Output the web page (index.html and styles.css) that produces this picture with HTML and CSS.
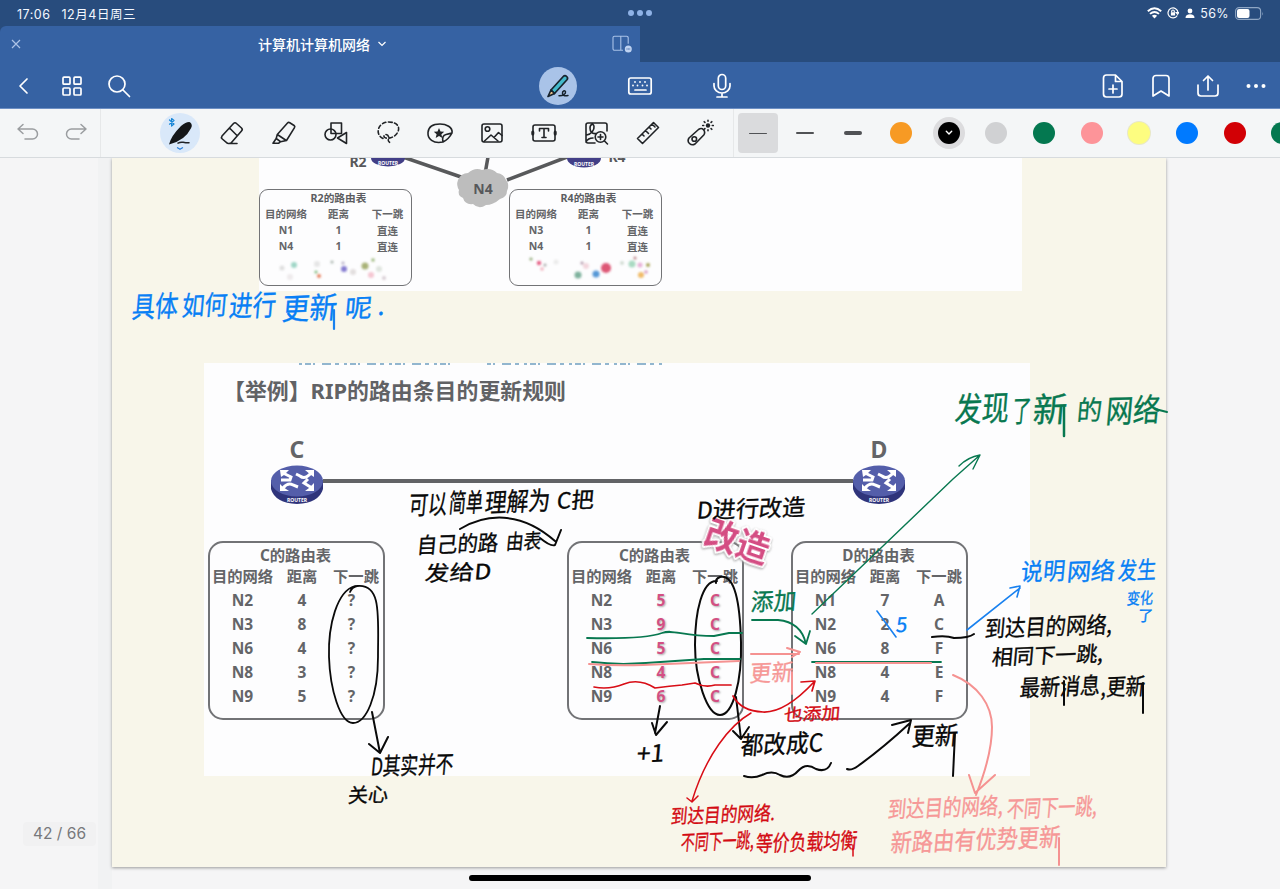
FILE: index.html
```html
<!DOCTYPE html>
<html lang="zh-CN">
<head>
<meta charset="utf-8">
<title>计算机计算机网络</title>
<link rel="stylesheet" href="styles.css">
</head>
<body>
<div class="app">
  <header class="status">
    <div class="status-left"><span>17:06</span><span class="date">12月4日周三</span></div>
    <div class="dots"><i></i><i></i><i></i></div>
    <div class="status-right">
      <svg width="15" height="12" viewBox="0 0 15 12" fill="none" stroke="#fff" stroke-width="1.9"><path d="M.8 4.2Q7.5-1.8 14.200 4.200M3 6.900Q7.500 3 12 6.900"/><path d="M7.500 11.500 4.900 8.700Q7.500 6.700 10.100 8.700Z" fill="#fff" stroke="none"/></svg>
      <svg class="lock" width="12" height="12" viewBox="0 0 12 12" fill="none" stroke="#fff" stroke-width="1.200"><path d="M10.300 8.500A5 5 0 1 1 11 5.500M9.200 5.500h2.600l-1.200 1.800z"/><rect x="3.900" y="5.300" width="4.200" height="3.200" fill="#fff" stroke="none"/><path d="M4.700 5.500V4.300a1.300 1.300 0 0 1 2.600 0v1.200"/></svg>
      <svg class="person" width="10" height="11" viewBox="0 0 10 11" fill="#fff"><circle cx="5" cy="3" r="2.400"/><path d="M.5 10Q.5 6.300 5 6.300T9.500 10Z"/></svg>
      <span class="pct">56%</span>
      <svg width="29" height="13" viewBox="0 0 29 13"><rect x=".6" y=".6" width="25" height="11.800" rx="3.500" fill="none" stroke="#8fa6c4" stroke-width="1.100"/><rect x="2" y="2" width="12.500" height="9" rx="2" fill="#fff"/><path d="M27.300 4.500q1.300 2 0 4z" fill="#8fa6c4"/></svg>
    </div>
  </header>

  <div class="tabs">
    <div class="tab">
      <svg class="tab-x" width="10" height="10" viewBox="0 0 10 10" stroke="#adc3e6" stroke-width="1.200"><path d="M1 1 9 9M9 1 1 9"/></svg>
      <div class="tab-title">计算机计算机网络<svg width="8" height="6" viewBox="0 0 8 6" fill="none" stroke="#fff" stroke-width="1.200"><path d="M.5 1 4 4.500 7.500 1"/></svg></div>
      <svg class="tab-split" width="21" height="18" viewBox="0 0 21 18" fill="none" stroke="#a9c2e8" stroke-width="1.100"><path d="M11 15.300H2.500a1.500 1.500 0 0 1-1.500-1.500v-11A1.500 1.500 0 0 1 2.500 1.300h12.200a1.500 1.500 0 0 1 1.500 1.500v6M8.800 1.300v14"/><circle cx="16.300" cy="14" r="3.500" fill="#bfd3f2" stroke="none"/><path d="M14.500 14h3.700" stroke="#4569a2" stroke-dasharray="1 .4"/></svg>
    </div>
  </div>

  <nav class="nav">
    <div class="cell"><svg width="26" height="26" viewBox="0 0 26 26"><path d="m16 6-7 7 7 7"/></svg></div>
    <div class="cell"><svg width="26" height="26" viewBox="0 0 26 26"><rect x="4" y="4.200" width="7" height="7" rx="1"/><rect x="15" y="4.200" width="7" height="7" rx="1"/><rect x="4" y="15" width="7" height="7" rx="1"/><rect x="15" y="15" width="7" height="7" rx="1"/></svg></div>
    <div class="cell"><svg width="26" height="26" viewBox="0 0 26 26"><circle cx="11" cy="11" r="8"/><path d="m17 17 6.500 6.500"/></svg></div>
    <div class="modes">
      <div class="mode on"><svg width="26" height="26" viewBox="0 0 26 26" stroke-linejoin="round"><path d="M6 17 18.500 3.200q1.600-1.200 3.200.3t.3 3.200L9.500 20.500Z" fill="#43b9cb" stroke="#17232d"/><path d="M6 17 3 23.500 9.500 20.500Z" fill="#f2c58c" stroke="#17232d"/><path d="M14 22.800c4 .2 7-2 6.500-4s-3.300-.7-3 1.500 2 3 5.500 2.200" stroke="#17232d" stroke-width="1.500"/></svg></div>
      <div class="mode"><svg width="26" height="26" viewBox="0 0 26 26"><rect x="1.800" y="5" width="22.400" height="16" rx="2"/><path d="M8 17h11"/><g fill="#fff" stroke="none"><circle cx="8" cy="9" r=".9"/><circle cx="13" cy="9" r=".9"/><circle cx="18" cy="9" r=".9"/><circle cx="6" cy="12.500" r=".9"/><circle cx="10.500" cy="12.500" r=".9"/><circle cx="15.500" cy="12.500" r=".9"/><circle cx="20" cy="12.500" r=".9"/></g></svg></div>
      <div class="mode"><svg width="26" height="26" viewBox="0 0 26 26"><rect x="9.300" y="1.500" width="7.400" height="15" rx="3.700"/><path d="M5 10.500v2.500a8 7 0 0 0 16 0v-2.500M13 20v4M8 24h10"/></svg></div>
    </div>
    <div class="cell"><svg width="26" height="26" viewBox="0 0 26 26"><path d="M15.500 2H6.500a3 3 0 0 0-3 3v16a3 3 0 0 0 3 3h12.500a3 3 0 0 0 3-3V8.500ZM15.500 2v6.500H22M13 12v8M9 16h8"/></svg></div>
    <div class="cell"><svg width="26" height="26" viewBox="0 0 26 26"><path d="M5 5.500a3 3 0 0 1 3-3h10a3 3 0 0 1 3 3V23l-8-5-8 5Z"/></svg></div>
    <div class="cell"><svg width="26" height="26" viewBox="0 0 26 26"><path d="M3 12v8a3 3 0 0 0 3 3h14a3 3 0 0 0 3-3v-8M13 17V3M8.500 7.500 13 3l4.500 4.500"/></svg></div>
    <div class="cell"><svg width="26" height="26" viewBox="0 0 26 26"><g fill="#fff" stroke="none"><circle cx="5.500" cy="13" r="2"/><circle cx="13" cy="13" r="2"/><circle cx="20.500" cy="13" r="2"/></g></svg></div>
  </nav>

  <div class="tools">
    <div class="undo"><svg width="26" height="26" viewBox="0 0 26 26"><path d="M8 4.500 3 9l5 4.500M3 9h14.500a5 5 0 0 1 0 10H10"/></svg></div>
    <div class="undo"><svg width="26" height="26" viewBox="0 0 26 26"><path d="m18 4.500 5 4.500-5 4.500M23 9H8.500a5 5 0 0 0 0 10H16"/></svg></div>
    <div class="rule"></div>
    <div class="toolset">
      <div class="tool pen"><svg width="40" height="40" viewBox="0 0 40 40"><path d="M9 31.500Q11 23 21 13q5.500-4.500 9-3.800 3 2.300 1 6Q25 27.500 9 31.500Z" fill="#151719" stroke="none"/><path d="M18 30.200c4-2.500 4-.2 11-.4" stroke-width="1.500"/><path d="M9.500 7 14 11l-2.400 2V5.500L14 7.500 9.500 11.200" stroke="#1685d6" stroke-width="1.200"/><path d="m17.500 34.800 2.500 1.500 2.500-1.500" stroke="#277edb" stroke-width="1.300"/></svg></div>
      <div class="tool"><svg width="26" height="26" viewBox="0 0 26 26"><path d="M3 16 14.500 3.500q1.500-1.500 3 0l5 4.500q1.500 1.500 0 3L12.500 22.500q-1.500 1.500-4 .8L3.300 19Q1.800 17.500 3 16ZM10.500 8l7.500 7.500M10 23.500h8"/></svg></div>
      <div class="tool"><svg width="26" height="26" viewBox="0 0 26 26"><path d="M6.300 14.500 16.500 3q1-1 2.300-.2l4.300 2.700q1.200.9.400 2.200L15.500 20.500l-6 1.200-4.300-3.200ZM6.300 14.500l9 6M5.200 18.500 2 23.300h5.500l2-1.600"/></svg></div>
      <div class="tool"><svg width="26" height="26" viewBox="0 0 26 26"><rect x="8" y="3" width="10.500" height="10.500"/><circle cx="7.500" cy="14.500" r="5.500"/><path d="M23.500 12.500v11L14.500 18Z"/></svg></div>
      <div class="tool"><svg width="26" height="26" viewBox="0 0 26 26"><path d="M8 18.500C-1 14 3.500 2 13.500 2S26 8.500 21.500 14 8.500 19 9 16s6-1 4.500 3 2.500 2.500 2 5" stroke-dasharray="3.500 2.600"/></svg></div>
      <div class="tool"><svg width="28" height="26" viewBox="0 0 28 26"><path d="M17 22C7 24 1.500 19 2 12.500S8 4 14 4s13 3 12 9Q23 19 17 22Q15.500 15.500 20 14.500T26 13"/><path d="m13 8 1.500 3.400 3.700.3-2.800 2.500.9 3.700-3.300-2-3.300 2 .9-3.700-2.800-2.500 3.700-.3Z" fill="#202326" stroke="none"/></svg></div>
      <div class="tool"><svg width="26" height="26" viewBox="0 0 26 26"><rect x="3" y="4" width="20" height="18" rx="2"/><circle cx="8.500" cy="9" r="2.300"/><path d="M5 21.500 12 15l7 6M15 17.500l4.500-5 3.500 3"/></svg></div>
      <div class="tool"><svg width="28" height="26" viewBox="0 0 28 26"><rect x="3" y="5" width="22" height="16" rx="2"/><path d="M9.500 11V8.500h9V11M14 8.500v9M12 17.500h4"/><path d="M2.800 12v2M25.200 12v2" stroke-width="3"/></svg></div>
      <div class="tool"><svg width="26" height="26" viewBox="0 0 26 26"><path d="M12 23H5a2 2 0 0 1-2-2V5a2 2 0 0 1 2-2h17a2 2 0 0 1 2 2v6M3.500 15c5-1 8-5 7.500-8.500S7 4 7 8s2 6 6 5.500M3 22q2-4 7-4"/><circle cx="17.500" cy="17" r="5.300"/><path d="m21.500 21 3 3M17.500 14.500v5M15 17h5"/></svg></div>
      <div class="tool"><svg width="26" height="26" viewBox="0 0 26 26"><path d="m2.500 18.500 16-16 5 5-16 16ZM7 14l2 2M10.500 10.500l3 3M14 7l2 2M17 4l3 3"/></svg></div>
      <div class="tool"><svg width="28" height="28" viewBox="0 0 28 28"><path d="m3 19 9.500-8.500q3-2 5 .2t.5 5L9 25q-3 1.800-5.500-.5T3 19Z"/><circle cx="8.300" cy="20" r="2.300"/><circle cx="22" cy="6.500" r="2.200" fill="#202326" stroke="none"/><path d="M22 1.200v1M22 10.800v1M16.700 6.500h1M26.300 6.500h1M18.200 2.700l.7.700M25.100 9.600l.7.700M25.800 2.700l-.7.700M18.900 9.600l-.7.700"/></svg></div>
    </div>
    <div class="rule"></div>
    <div class="strokes">
      <div class="stroke chosen"><i class="thin"></i></div>
      <div class="stroke"><i class="mid"></i></div>
      <div class="stroke"><i class="thick"></i></div>
    </div>
    <div class="colours">
      <div><i class="c-orange"></i></div>
      <div><i class="c-black"><svg class="pick" width="8" height="6" viewBox="0 0 8 6"><path d="m1.300 1.300 2.700 2.700 2.700-2.700"/></svg></i></div>
      <div><i class="c-grey"></i></div>
      <div><i class="c-green"></i></div>
      <div><i class="c-pink"></i></div>
      <div><i class="c-yellow"></i></div>
      <div><i class="c-blue"></i></div>
      <div><i class="c-red"></i></div>
      <div><i class="c-green"></i></div>
    </div>
  </div>

  <main class="canvas">
    <div class="gutter"></div>
    <article class="page"></article>

    <section class="slide slide-a">
      <svg class="topology" width="763" height="133" viewBox="259 158 763 133">
        <g stroke="#58595b" stroke-width="3.500"><path d="M403 157 464 178M488 157l-3 17M567 157 507 180"/></g>
        <path d="M458 180q3-7 10-7 7-6 14-3 9-3 15 3 7 1 9 7 4 5 1 11 0 6-7 8-7 6-14 6-7 5-13-1-8 1-10-6-6-3-4-8-3-5-1-10Z" fill="#bdbdbd"/>
        <text x="483" y="194" text-anchor="middle" class="node" font-size="14">N4</text>
        <text x="358" y="167" text-anchor="middle" class="node" font-size="14">R2</text>
        <text x="617" y="162" text-anchor="middle" class="node" font-size="14">R4</text>
        <g fill="#423f87"><ellipse cx="388" cy="158" rx="17" ry="8.500"/><ellipse cx="584" cy="158" rx="17" ry="9.500"/></g>
        <g class="router-label"><text x="388" y="164.500">ROUTER</text><text x="584" y="166">ROUTER</text></g>
      </svg>
      <div class="mini-row">
        <div class="table mini">
          <h3>R2的路由表</h3>
          <div class="head"><b>目的网络</b><b>距离</b><b>下一跳</b></div>
          <div class="row"><b>N1</b><b>1</b><b>直连</b></div>
          <div class="row"><b>N4</b><b>1</b><b>直连</b></div>
        </div>
        <div class="table mini">
          <h3>R4的路由表</h3>
          <div class="head"><b>目的网络</b><b>距离</b><b>下一跳</b></div>
          <div class="row"><b>N3</b><b>1</b><b>直连</b></div>
          <div class="row"><b>N4</b><b>1</b><b>直连</b></div>
        </div>
      </div>
    </section>

    <section class="slide slide-b">
      <svg class="cut" width="380" height="4" viewBox="0 0 380 4"><path d="M4 1H370" stroke="#6f9fc0" stroke-width="1.500" stroke-dasharray="3 3 6 2 2 7 9 4 4 5"/><path d="M155 0h37v4h-37z" fill="#fdfdfe"/></svg>
      <h2>【举例】RIP的路由条目的更新规则</h2>
      <div class="link">
        <div class="host"><span>C</span>
          <svg width="52" height="40" viewBox="0 0 52 40"><path d="M0 15v9q4 14 26 15 22-1 26-15v-9Z" fill="#2f347b"/><ellipse cx="26" cy="16" rx="26" ry="15.500" fill="#545eaa"/><g fill="none" stroke="#fff" stroke-width="3"><path d="m12 8 8 4-1 3h-9M40 8q-6 7-11 3l-4-2M12 23q5-6 10-3l5 2M41 23l-8-5 4-4"/></g><path d="M9 5h9l-2 2-3 3-3 2ZM34 5h9v7l-3-2ZM9 26v-7l3 3 6 4ZM43 18v8h-9l4-3Z" fill="#fff"/><text x="26" y="36.500" class="router-label">ROUTER</text></svg>
        </div>
        <div class="wire"></div>
        <div class="host"><span>D</span>
          <svg width="52" height="40" viewBox="0 0 52 40"><path d="M0 15v9q4 14 26 15 22-1 26-15v-9Z" fill="#2f347b"/><ellipse cx="26" cy="16" rx="26" ry="15.500" fill="#545eaa"/><g fill="none" stroke="#fff" stroke-width="3"><path d="m12 8 8 4-1 3h-9M40 8q-6 7-11 3l-4-2M12 23q5-6 10-3l5 2M41 23l-8-5 4-4"/></g><path d="M9 5h9l-2 2-3 3-3 2ZM34 5h9v7l-3-2ZM9 26v-7l3 3 6 4ZM43 18v8h-9l4-3Z" fill="#fff"/><text x="26" y="36.500" class="router-label">ROUTER</text></svg>
        </div>
      </div>
      <div class="table-row">
        <div class="table big">
          <h3>C的路由表</h3>
          <div class="head"><b>目的网络</b><b>距离</b><b>下一跳</b></div>
          <div class="row q"><b>N2</b><b>4</b><b>?</b></div>
          <div class="row q"><b>N3</b><b>8</b><b>?</b></div>
          <div class="row q"><b>N6</b><b>4</b><b>?</b></div>
          <div class="row q"><b>N8</b><b>3</b><b>?</b></div>
          <div class="row q"><b>N9</b><b>5</b><b>?</b></div>
        </div>
        <div class="table big changed">
          <h3>C的路由表</h3>
          <div class="head"><b>目的网络</b><b>距离</b><b>下一跳</b></div>
          <div class="row"><b>N2</b><b>5</b><b>C</b></div>
          <div class="row"><b>N3</b><b>9</b><b>C</b></div>
          <div class="row"><b>N6</b><b>5</b><b>C</b></div>
          <div class="row"><b>N8</b><b>4</b><b>C</b></div>
          <div class="row"><b>N9</b><b>6</b><b>C</b></div>
        </div>
        <div class="table big last">
          <h3>D的路由表</h3>
          <div class="head"><b>目的网络</b><b>距离</b><b>下一跳</b></div>
          <div class="row"><b>N1</b><b>7</b><b>A</b></div>
          <div class="row"><b>N2</b><b>2</b><b>C</b></div>
          <div class="row"><b>N6</b><b>8</b><b>F</b></div>
          <div class="row"><b>N8</b><b>4</b><b>E</b></div>
          <div class="row"><b>N9</b><b>4</b><b>F</b></div>
        </div>
      </div>
    </section>

    <svg class="inklayer" width="1280" height="731" viewBox="0 158 1280 731">
      <defs><filter id="soft" x="-50%" y="-50%" width="200%" height="200%"><feGaussianBlur stdDeviation=".8"/></filter></defs>
      <g filter="url(#soft)">
        <g opacity=".75"><circle cx="294" cy="265" r="3" fill="#7ec9b5"/><circle cx="344" cy="269" r="3" fill="#5b4fc0"/><circle cx="365" cy="266" r="3.500" fill="#8c9a4a"/><circle cx="319" cy="276" r="2" fill="#e05a2a"/><circle cx="316" cy="272" r="1.500" fill="#4ea04e"/><circle cx="371" cy="275" r="3" fill="#f2b3c2"/><circle cx="373" cy="260" r="1.700" fill="#7aa050"/><circle cx="282" cy="268" r="2.500" fill="#d5d5d5"/><circle cx="317" cy="264" r="3" fill="#dedede"/><circle cx="353" cy="272" r="3" fill="#d9d4d4"/><circle cx="379" cy="269" r="3" fill="#d6ddd4"/><circle cx="332" cy="262" r="1.500" fill="#8a9a90"/><circle cx="343" cy="263" r="1.500" fill="#9a8fb0"/><circle cx="384" cy="278" r="2" fill="#cdbcc6"/><circle cx="290" cy="277" r="3" fill="#e9e4e6"/></g>
        <g opacity=".85"><circle cx="606" cy="268" r="5" fill="#d8395e"/><circle cx="596" cy="274" r="3.500" fill="#3a86d0"/><circle cx="578" cy="275" r="3.500" fill="#69a58c"/><circle cx="539" cy="263" r="2.200" fill="#e2406e"/><circle cx="531" cy="259" r="1.600" fill="#7d9a60"/><circle cx="542" cy="269" r="1.800" fill="#f0a6b4"/><circle cx="545" cy="265" r="1.500" fill="#9a9a9a"/><circle cx="632" cy="264" r="3.500" fill="#9bd4b8"/><circle cx="641" cy="275" r="3" fill="#eeb04e"/><circle cx="640" cy="265" r="2.500" fill="#e4a4d0"/><circle cx="648" cy="265" r="2" fill="#9a9440"/><circle cx="586" cy="266" r="3" fill="#f1cfd8"/><circle cx="582" cy="263" r="1.500" fill="#a08098"/><circle cx="635" cy="258" r="1.500" fill="#b06a70"/><circle cx="646" cy="272" r="1.800" fill="#d38eb8"/><circle cx="556" cy="262" r="2.500" fill="#e8e8e8"/><circle cx="622" cy="263" r="2" fill="#c9d5cc"/></g>
      </g>

      <text class="stamp" transform="translate(702 543) rotate(19)" textLength="66" lengthAdjust="spacingAndGlyphs">改造</text>

      <g class="ink blue">
        <text x="132" y="317" font-size="29" textLength="46" lengthAdjust="spacingAndGlyphs">具体</text>
        <text x="182" y="315" font-size="27" textLength="45" lengthAdjust="spacingAndGlyphs">如何</text>
        <text x="229" y="316" font-size="29" textLength="47" lengthAdjust="spacingAndGlyphs">进行</text>
        <text x="282" y="319" font-size="30" textLength="55" lengthAdjust="spacingAndGlyphs">更新</text>
        <text x="345" y="317" font-size="25" textLength="27" lengthAdjust="spacingAndGlyphs">呢</text>
        <text x="378" y="315" font-size="25">.</text>
        <text x="1021" y="580" font-size="24" textLength="44" lengthAdjust="spacingAndGlyphs">说明</text>
        <text x="1067" y="580" font-size="24" textLength="48" lengthAdjust="spacingAndGlyphs">网络</text>
        <text x="1118" y="579" font-size="24" textLength="38" lengthAdjust="spacingAndGlyphs">发生</text>
        <text x="1127" y="604" font-size="16" textLength="26" lengthAdjust="spacingAndGlyphs">变化</text>
        <text x="1138" y="621" font-size="15">了</text>
        <text x="896" y="632" font-size="20">5</text>
      </g>
      <g class="ink green">
        <text x="955" y="421" font-size="34" textLength="54" lengthAdjust="spacingAndGlyphs">发现</text>
        <text x="1012" y="422" font-size="30" textLength="19" lengthAdjust="spacingAndGlyphs">了</text>
        <text x="1033" y="422" font-size="34" textLength="34" lengthAdjust="spacingAndGlyphs">新</text>
        <text x="1077" y="420" font-size="27" textLength="25" lengthAdjust="spacingAndGlyphs">的</text>
        <text x="1106" y="422" font-size="32" textLength="54" lengthAdjust="spacingAndGlyphs">网络</text>
        <text x="751" y="610" font-size="24" textLength="45" lengthAdjust="spacingAndGlyphs">添加</text>
      </g>
      <g class="ink black">
        <text x="409" y="514" font-size="26" textLength="38" lengthAdjust="spacingAndGlyphs">可以</text>
        <text x="449" y="512" font-size="26" textLength="34" lengthAdjust="spacingAndGlyphs">简单</text>
        <text x="485" y="511" font-size="26" textLength="65" lengthAdjust="spacingAndGlyphs">理解为</text>
        <text x="557" y="508" font-size="22" textLength="37" lengthAdjust="spacingAndGlyphs">C把</text>
        <text x="417" y="552" font-size="22" textLength="81" lengthAdjust="spacingAndGlyphs">自己的路</text>
        <text x="506" y="549" font-size="21" textLength="35" lengthAdjust="spacingAndGlyphs">由表</text>
        <text x="425" y="580" font-size="21" textLength="66" lengthAdjust="spacingAndGlyphs">发给D</text>
        <text x="697" y="517" font-size="23" textLength="108" lengthAdjust="spacingAndGlyphs">D进行改造</text>
        <text x="371" y="774" font-size="24" textLength="82" lengthAdjust="spacingAndGlyphs">D其实并不</text>
        <text x="348" y="802" font-size="20" textLength="40" lengthAdjust="spacingAndGlyphs">关心</text>
        <text x="637" y="762" font-size="24" textLength="27" lengthAdjust="spacingAndGlyphs">+1</text>
        <text x="741" y="753" font-size="25" textLength="82" lengthAdjust="spacingAndGlyphs">都改成C</text>
        <text x="912" y="745" font-size="25" textLength="46" lengthAdjust="spacingAndGlyphs">更新</text>
        <text x="985" y="635" font-size="23" textLength="127" lengthAdjust="spacingAndGlyphs">到达目的网络,</text>
        <text x="992" y="663" font-size="21" textLength="111" lengthAdjust="spacingAndGlyphs">相同下一跳,</text>
        <text x="1020" y="695" font-size="23" textLength="80" lengthAdjust="spacingAndGlyphs">最新消息</text>
        <text x="1101" y="695" font-size="23" textLength="44" lengthAdjust="spacingAndGlyphs">,更新</text>
      </g>
      <g class="ink red">
        <text x="784" y="720" font-size="17" textLength="56" lengthAdjust="spacingAndGlyphs">也添加</text>
        <text x="671" y="822" font-size="20" textLength="104" lengthAdjust="spacingAndGlyphs">到达目的网络.</text>
        <text x="681" y="849" font-size="21" textLength="73" lengthAdjust="spacingAndGlyphs">不同下一跳,</text>
        <text x="756" y="850" font-size="22" textLength="101" lengthAdjust="spacingAndGlyphs">等价负载均衡</text>
      </g>
      <g class="ink pink">
        <text x="750" y="681" font-size="23" textLength="43" lengthAdjust="spacingAndGlyphs">更新</text>
        <text x="888" y="816" font-size="23" textLength="115" lengthAdjust="spacingAndGlyphs">到达目的网络,</text>
        <text x="1007" y="816" font-size="23" textLength="90" lengthAdjust="spacingAndGlyphs">不同下一跳,</text>
        <text x="891" y="849" font-size="25" textLength="169" lengthAdjust="spacingAndGlyphs">新路由有优势更新</text>
      </g>

      <g class="line" stroke="#0a0a0a">
        <path d="M355 586C337 591 328 625 329 657s11 66 24 66 25-26 25-66 4-74-21-71q-5 1-7 6" stroke-width="1.800"/>
        <path d="m372 712 8 41M369 744l11 9 8-16M460 529c25-15 60-19 95 12M540 538q11 9 15 7l6-15"/>
        <path d="M717 581c-15-1-22 31-22 64s12 70 25 70 22-34 21-73-6-68-21-65q-5 2-4 6M660 706l-5 27M652 723l4 12 11-13M736 697l5 42M733 731l8 8 8-12"/>
        <path d="M744 776q9 3 18-1 10-5 18 0 10 5 18-4t18-2q11 4 15-6M847 769q4 2 11-3 25-18 52-43M892 725l19-5-3 13M955 733l-2 43M932 637q14-2 22 1 15 0 20-4"/>
        <path d="M1143 683v30M1064 681v24"/>
      </g>
      <g class="line" stroke="#087850">
        <path d="M587 638c42 1 64-1 75-5s20 3 52 3l15-3h13M592 662q25 3 54 1t58-4h36M812 662h129" stroke-width="1.800"/>
        <path d="M752 620h26q23 2 28 24M795 636l11 8 4-13" stroke-width="1.800"/>
        <path d="M812 614 953 479 980 455M959 466q9-9 21-11l-7 14" stroke-width="1.400"/>
        <path d="M1064 406v30" stroke-width="2.500"/><path d="M1155 409l12 3"/>
      </g>
      <g class="line" stroke="#d80d16">
        <path d="M594 687q15 3 30-3t31 4q15-2 27-3l13-2q10 5 20 2l16 0M733 696q8 15 30 16t51-30M801 682l14-1-3 10" stroke-width="1.700"/>
        <path d="M751 713c-21 12-45 42-59 88M687 798l5 4 6-6M853 845v11" stroke-width="1.500"/>
      </g>
      <g class="line" stroke="#f59291">
        <path d="M589 664q25 2 54 1t96-4M816 663h115M751 654h48M787 648l13 4-8 5M953 675c25 10 39 30 39 52q0 28-16 68M969 775l6 18 20-18M792 672v22M1059 838v27" stroke-width="2"/>
      </g>
      <g class="line" stroke="#1981ef"><path d="m877 611 19 26M967 630l53-42M1010 588l10-2-3 11" stroke-width="1.600"/><path d="M334 310v19" stroke-width="2.200"/></g>
    </svg>
    <div class="counter">42 / 66</div>
    <div class="home"></div>
  </main>
</div>
</body>
</html>
```
FILE: styles.css
```css
* { box-sizing: border-box; }
body { margin: 0; font-family: Inter, "Noto Sans CJK SC", sans-serif; }
.app { width: 1280px; height: 889px; display: flex; flex-direction: column; overflow: hidden; }
.app svg { display: block; flex: none; }

.status { height: 26px; background: #284c7d; color: #f4f8ff; display: grid; grid-template-columns: 1fr 24px 1fr; align-items: center; font-size: 12.5px; }
.status-left { display: flex; align-items: baseline; gap: 11px; padding-left: 17px; letter-spacing: .5px; }
.date { letter-spacing: .55px; }
.dots { display: flex; justify-content: space-between; }
.dots i { width: 6px; height: 6px; border-radius: 50%; background: #8fb2e6; }
.status-right { display: flex; justify-content: flex-end; align-items: center; padding-right: 16px; }
.lock { margin-left: 5px; }
.person { margin-left: 6px; }
.pct { margin: 0 6px 0 5px; letter-spacing: .4px; }

.tabs { height: 36px; background: #284c7d; }
.tab { width: 640px; height: 36px; background: #3662a3; border-top-left-radius: 6px; display: flex; align-items: center; justify-content: space-between; padding: 0 7px 0 11px; }
.tab-title { color: #fff; font-size: 14px; font-weight: 500; display: flex; align-items: center; gap: 8px; margin-left: 11px; }

.nav { height: 47px; background: #3662a3; border-bottom: 1px solid #6d8fc4; display: flex; align-items: center; padding-top: 1px; }
.nav svg { fill: none; stroke: #fff; stroke-width: 1.7; stroke-linecap: round; stroke-linejoin: round; }
.cell { width: 47.700px; display: flex; justify-content: center; }
.modes { flex: 1; display: flex; justify-content: center; padding-left: 47px; }
.mode { width: 82px; display: flex; justify-content: center; align-items: center; }
.mode.on { width: 38px; height: 38px; border-radius: 50%; background: #a9c3e8; margin: 0 22px; }

.tools { height: 49px; background: #f4f6f7; border-bottom: 1px solid #d7dbde; display: flex; align-items: center; overflow: hidden; }
.tools > * { flex: none; }
.tools svg { fill: none; stroke: #202326; stroke-width: 1.6; stroke-linecap: round; stroke-linejoin: round; }
.tools .undo { width: 48px; display: flex; justify-content: center; }
.tools .undo:first-child { margin-left: 4px; }
.tools .undo svg { stroke: #9a9da0; stroke-width: 1.5; }
.rule { width: 1px; height: 48px; background: #e6e8e9; }
.toolset { display: flex; margin-left: 53px; width: 579px; }
.tool { width: 52px; height: 40px; flex: none; display: flex; align-items: center; justify-content: center; }
.tool.pen { width: 40px; margin: 0 6px; border-radius: 50%; background: #d9e8f9; }
.strokes { display: flex; width: 143px; }
.stroke { width: 47.700px; height: 40px; display: flex; justify-content: center; align-items: center; }
.stroke.chosen { width: 40px; margin: 0 3.800px; background: #dadbdd; border-radius: 4px; }
.stroke i { width: 18px; border-radius: 2px; background: #505255; }
.stroke .thin { height: 1px; }
.stroke .mid { height: 2.500px; }
.stroke .thick { height: 4px; }
.colours { display: flex; }
.colours div { width: 47.700px; display: flex; justify-content: center; flex: none; }
.colours i { width: 22px; height: 22px; border-radius: 50%; display: flex; align-items: center; justify-content: center; }
.colours .pick { stroke: #fff; stroke-width: 1.4; }
.c-orange { background: #f79a24; }
.c-black { background: #000; box-shadow: 0 0 0 5px #dcdcde; }
.c-grey { background: #d0d1d3; }
.c-green { background: #047850; }
.c-pink { background: #fd9499; }
.c-yellow { background: #fdfd80; box-shadow: 0 0 0 1px #e8e8c8; }
.c-blue { background: #007aff; }
.c-red { background: #d20005; }

.canvas { position: relative; height: 731px; background: #f5f5f6; overflow: hidden; }
.gutter { position: absolute; left: 98px; top: 0; width: 14px; height: 731px; background: #f1f2f3; }
.page { position: absolute; left: 112px; top: 0; width: 1054px; height: 709px; background: #f8f6ea; box-shadow: 0 1px 3px #999; }
.slide { position: absolute; background: #fdfdfe; color: #646568; font-family: "Noto Sans", "Noto Sans CJK SC", sans-serif; }
.slide-a { left: 259px; top: 0; width: 763px; height: 133px; padding-top: 31px; }
.topology { position: absolute; left: 0; top: 0; }
.node { font-weight: 700; fill: #57585b; }
.router-label { font: 700 5px "Noto Sans", sans-serif; fill: #fff; text-anchor: middle; }
.mini-row { display: flex; gap: 97px; }
.table { border: 2px solid #727376; position: relative; }
.table h3 { margin: 0; text-align: center; font-weight: 700; }
.head, .row { display: grid; text-align: center; align-items: center; white-space: nowrap; }
.head b, .row b { display: flex; justify-content: center; align-items: center; height: 100%; font-weight: 700; }
.mini { width: 153px; height: 97px; border-width: 1.500px; border-radius: 9px; font-size: 10.500px; }
.mini h3 { font-size: 10.700px; line-height: 16px; padding-left: 6px; color: #5c5d61; }
.mini .head, .mini .row { grid-template-columns: 52px 53px 45px; height: 16px; }
.mini .head { height: 14px; margin-bottom: 2px; }

.slide-b { left: 204px; top: 205px; width: 826px; height: 413px; }
.cut { margin-left: 91px; }
.slide-b h2 { margin: 8px 0 0 19px; font-size: 21.900px; line-height: 32px; font-weight: 700; color: #616265; }
.link { display: flex; height: 71px; margin: 27px 0 0 67px; }
.host { width: 52px; display: flex; flex-direction: column; align-items: center; }
.host span { font-size: 23px; line-height: 31px; font-weight: 700; }
.wire { width: 530px; height: 4px; margin-top: 45px; background: #626366; }
.table-row { display: flex; margin: 36px 0 0 4px; gap: 183px; }
.last { margin-left: -135px; }
.big { width: 177px; height: 179px; border-radius: 15px; font-size: 15.5px; padding-top: 1px; margin-right: -1px; }
.big h3 { font-size: 15.300px; line-height: 22px; padding-right: 2px; }
.big .head, .big .row { grid-template-columns: 65px 54px 54px; height: 24px; }
.big .head { height: 20px; font-size: 15.300px; line-height: 20px; margin-bottom: 2px; }
.q b:last-child { padding-right: 9px; }
.changed .row b:not(:first-child) { color: #d34f83; text-shadow: 1px 1px 2px #aaa; }

.inklayer { position: absolute; left: 0; top: 0; }
.ink { font-family: "Noto Sans CJK SC", sans-serif; stroke-width: .35px; }
.ink text { transform-box: fill-box; transform-origin: 50% 60%; transform: skewX(-7deg) rotate(-2deg); }
.blue { fill: #087ff5; stroke: #087ff5; }
.green { fill: #087850; stroke: #087850; }
.black { fill: #080808; stroke: #080808; }
.red { fill: #d30b13; stroke: #d30b13; }
.pink { fill: #f69897; stroke: #f69897; }
.line { fill: none; stroke-width: 2; stroke-linecap: round; stroke-linejoin: round; }
.stamp { font: 700 35px "Noto Sans CJK SC", sans-serif; fill: #d44d83; stroke: #fff; stroke-width: 4px; paint-order: stroke; stroke-linejoin: round; filter: drop-shadow(0 1px 1px #999); }
.counter { position: absolute; left: 23px; top: 664px; width: 73px; height: 24px; line-height: 24px; text-align: center; background: #f1f1f2; border-radius: 4px; color: #77787b; font-size: 15.500px; }
.home { position: absolute; left: 469px; top: 717px; width: 342px; height: 6px; border-radius: 3px; background: #000; }
```
